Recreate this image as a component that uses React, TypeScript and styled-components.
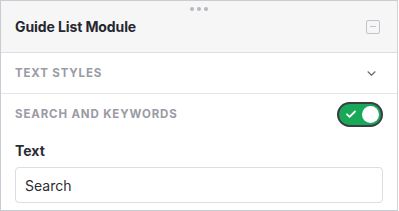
import styled, { createGlobalStyle } from "styled-components";

const GlobalStyle = createGlobalStyle`
  body {
    margin: 0;
    background: #ffffff;
    font-family: Inter, "Noto Sans", sans-serif;
  }
`;

const Panel = styled.div`
  width: 398px;
  height: 211px;
  box-sizing: border-box;
  border: 1px solid #c9ccd2;
  border-right-color: #d2d4d9;
  background: #ffffff;
  overflow: hidden;
`;

const Header = styled.div`
  position: relative;
  height: 52px;
  box-sizing: border-box;
  display: flex;
  align-items: center;
  justify-content: space-between;
  padding: 0 17px 0 14px;
  background: #f6f6f7;
  border-bottom: 1px solid #dcdde2;
`;

const Title = styled.h2`
  margin: 0;
  font-size: 14px;
  font-weight: 700;
  color: #26272e;
  letter-spacing: -0.1px;
`;

const DragHandle = styled.div`
  position: absolute;
  top: 6px;
  left: 50%;
  transform: translateX(-50%);
  display: flex;
  gap: 3px;
`;

const Dot = styled.span`
  width: 4px;
  height: 4px;
  border-radius: 50%;
  background: #b7b8c1;
`;

const MinimizeButton = styled.button`
  width: 14px;
  height: 14px;
  padding: 0;
  box-sizing: border-box;
  border: 1.5px solid #c3c4cb;
  border-radius: 2px;
  background: transparent;
  display: flex;
  align-items: center;
  justify-content: center;
  &::after {
    content: "";
    width: 6px;
    height: 1.5px;
    background: #c3c4cb;
  }
`;

const Row = styled.div<{ $divider?: boolean }>`
  height: ${(p) => (p.$divider ? "41px" : "40px")};
  box-sizing: border-box;
  display: flex;
  align-items: center;
  justify-content: space-between;
  padding: 0 14px;
  border-bottom: ${(p) => (p.$divider ? "1px solid #e4e5ea" : "none")};
`;

const RowLabel = styled.span`
  font-size: 11.5px;
  font-weight: 700;
  letter-spacing: 0.85px;
  text-transform: uppercase;
  color: #9a9ba5;
`;

const Chevron = styled.svg`
  margin-right: 7px;
`;

const Toggle = styled.button<{ $on: boolean }>`
  width: 46px;
  height: 25px;
  padding: 0 2px;
  box-sizing: border-box;
  border: 2px solid #3b3d42;
  border-radius: 13px;
  background: ${(p) => (p.$on ? "#17a957" : "#d0d1d6")};
  display: flex;
  align-items: center;
  justify-content: space-between;
`;

const Knob = styled.span`
  width: 17px;
  height: 17px;
  border-radius: 50%;
  background: #ffffff;
`;

const Field = styled.div`
  padding: 8px 14px 0;
  display: flex;
  flex-direction: column;
  gap: 8px;
`;

const FieldLabel = styled.label`
  font-size: 14px;
  font-weight: 700;
  color: #2b2c33;
  line-height: 17px;
`;

const Input = styled.input`
  height: 36px;
  box-sizing: border-box;
  width: 100%;
  border: 1px solid #dcdce2;
  border-radius: 4px;
  padding: 0 9px;
  font-family: Inter, "Noto Sans", sans-serif;
  font-size: 14px;
  color: #2b2c33;
  background: #ffffff;
  outline: none;
`;

function App() {
  return (
    <>
      <GlobalStyle />
      <Panel>
        <Header>
          <DragHandle>
            <Dot />
            <Dot />
            <Dot />
          </DragHandle>
          <Title>Guide List Module</Title>
          <MinimizeButton aria-label="Collapse" />
        </Header>
        <Row $divider>
          <RowLabel>Text Styles</RowLabel>
          <Chevron width="9" height="5" viewBox="0 0 9 5">
            <path d="M1 0.8l3.5 3.4 3.5-3.4" fill="none" stroke="#6a6b75" strokeWidth="1.2" strokeLinecap="round" strokeLinejoin="round" />
          </Chevron>
        </Row>
        <Row>
          <RowLabel>Search and Keywords</RowLabel>
          <Toggle $on aria-label="Search and keywords">
            <svg width="14" height="14" viewBox="0 0 14 14" style={{ marginLeft: 3 }}>
              <path d="M3 7.3l2.6 2.5L11 4.5" fill="none" stroke="#ffffff" strokeWidth="1.8" strokeLinecap="round" strokeLinejoin="round" />
            </svg>
            <Knob />
          </Toggle>
        </Row>
        <Field>
          <FieldLabel>Text</FieldLabel>
          <Input defaultValue="Search" />
        </Field>
      </Panel>
    </>
  );
}

export default App;
